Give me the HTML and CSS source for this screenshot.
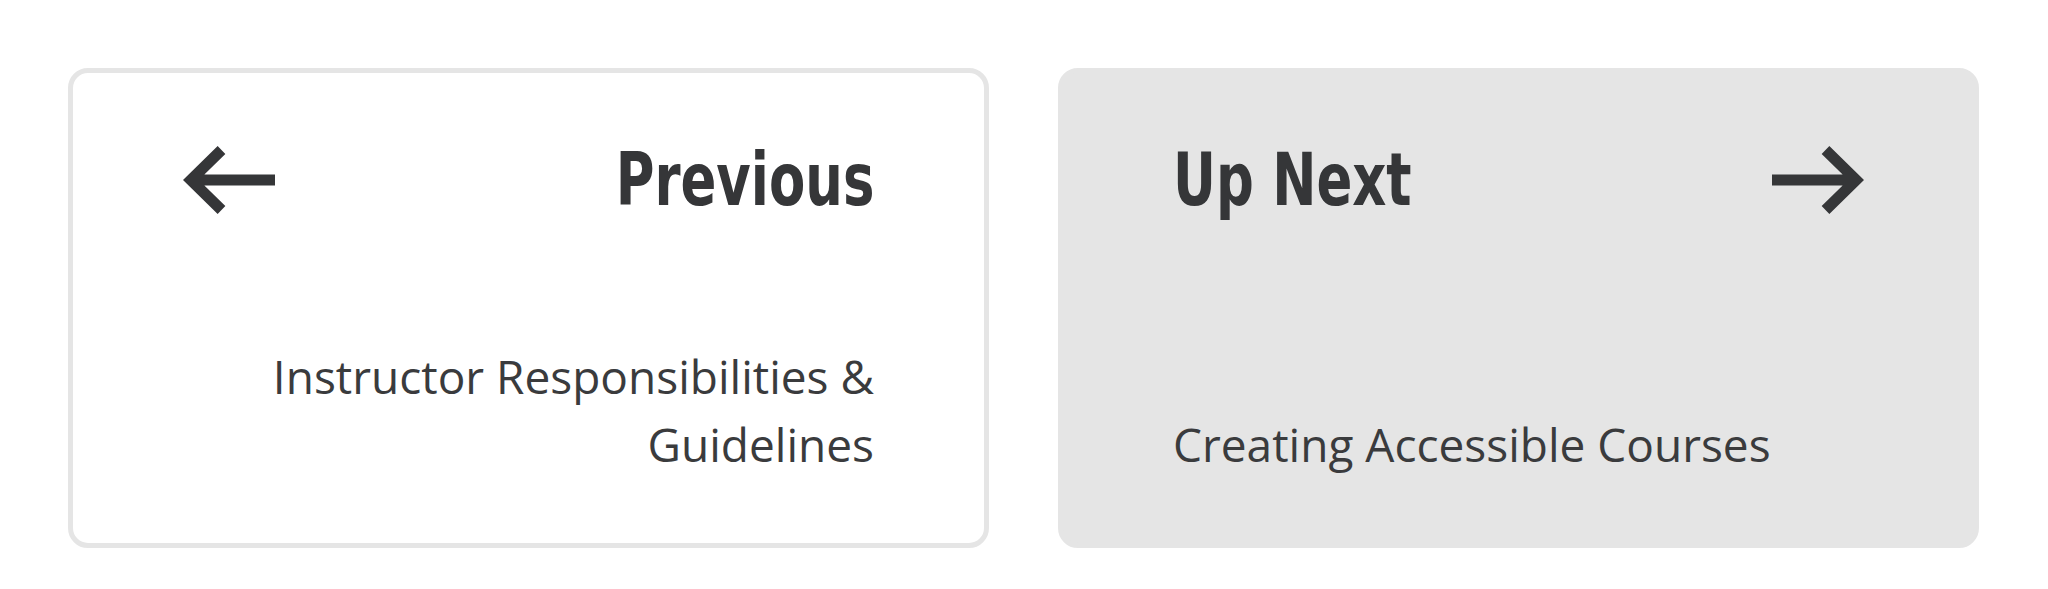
FILE: index.html
```html
<!DOCTYPE html>
<html lang="en">
<head>
<meta charset="utf-8">
<title>Lesson navigation</title>
<link rel="stylesheet" href="styles.css">
</head>
<body>
<nav class="pager">
  <a class="card card-prev" href="#">
    <div class="card-head">
      <svg class="arrow" width="92" height="68" viewBox="0 0 92 68" aria-hidden="true">
        <path d="M38.5 4 L7.8 34 L38.5 64 M7.8 34 H92" fill="none" stroke="#353638" stroke-width="11" stroke-linejoin="miter" stroke-miterlimit="4"/>
      </svg>
      <span class="card-title">Previous</span>
    </div>
    <p class="card-text">Instructor Responsibilities &amp; Guidelines</p>
  </a>
  <a class="card card-next" href="#">
    <div class="card-head">
      <span class="card-title">Up Next</span>
      <svg class="arrow" width="92" height="68" viewBox="0 0 92 68" aria-hidden="true">
        <path d="M53.5 4 L84.2 34 L53.5 64 M84.2 34 H0" fill="none" stroke="#353638" stroke-width="11" stroke-linejoin="miter" stroke-miterlimit="4"/>
      </svg>
    </div>
    <p class="card-text">Creating Accessible Courses</p>
  </a>
</nav>
</body>
</html>
```

FILE: styles.css
```css
html, body {
  margin: 0;
  padding: 0;
  background: #ffffff;
}

.pager {
  display: grid;
  grid-template-columns: 1fr 1fr;
  column-gap: 69px;
  padding: 68px 69px 41px 68px;
}

.card {
  box-sizing: border-box;
  height: 480px;
  display: flex;
  flex-direction: column;
  justify-content: space-between;
  padding: 70px 110px 65px 110px;
  border: 5px solid #e5e5e5;
  border-radius: 20px;
  text-decoration: none;
  color: #353638;
}

.card-prev {
  background: #ffffff;
}

.card-next {
  background: #e5e5e5;
}

.card-head {
  display: flex;
  justify-content: space-between;
  align-items: center;
}

.arrow {
  display: block;
  flex: none;
}

.card-title {
  display: inline-block;
  font-family: "DejaVu Sans Condensed", "DejaVu Sans", sans-serif;
  font-stretch: condensed;
  font-weight: 700;
  font-size: 73px;
  line-height: 74px;
  color: #353638;
  transform: scaleX(0.805);
}

.card-prev .card-title {
  transform-origin: right center;
}

.card-next .card-title {
  transform-origin: left center;
}

.card-text {
  margin: 0;
  font-family: "Open Sans", "Liberation Sans", sans-serif;
  font-weight: 400;
  font-size: 46px;
  line-height: 68px;
  color: #3a3b3d;
}

.card-prev .card-text {
  text-align: right;
}

.card-next .card-text {
  text-align: left;
}
```
